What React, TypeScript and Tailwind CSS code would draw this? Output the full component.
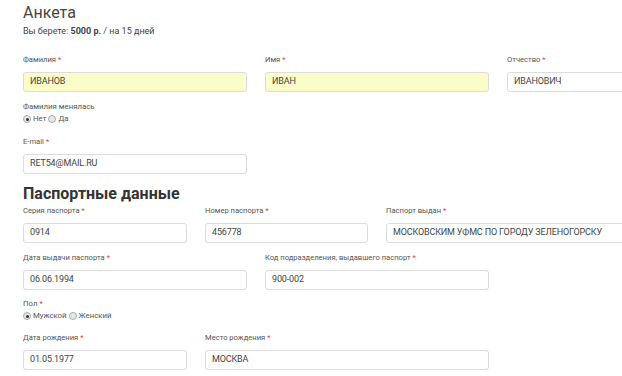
import React from "react";

const Label = ({ text }: { text: string }) => (
  <div className="text-[7.6px] leading-[12px] text-[#555] h-[12px] whitespace-nowrap">
    {text}
    <span className="text-[#e53935] ml-[2px]">*</span>
  </div>
);

const Input = ({ value, w, yellow }: { value: string; w: string; yellow?: boolean }) => (
  <div
    className={`${w} h-[20px] mt-[6px] border border-[#dcdcdc] rounded-[3px] flex items-center px-[6px] text-[9px] tracking-[-0.15px] text-[#444] whitespace-nowrap overflow-hidden ${
      yellow ? "bg-[#fafdc8]" : "bg-white"
    }`}
  >
    {value}
  </div>
);

const Field = ({ label, value, w, yellow }: { label: string; value: string; w: string; yellow?: boolean }) => (
  <div className="flex flex-col shrink-0">
    <Label text={label} />
    <Input value={value} w={w} yellow={yellow} />
  </div>
);

const Radio = ({ checked, label }: { checked?: boolean; label: string }) => (
  <span className="inline-flex items-center gap-[2px] mr-[2px]">
    <span className="w-[8px] h-[8px] rounded-full border border-[#aaa] bg-[#e8e8e8] flex items-center justify-center">
      {checked && <span className="w-[3px] h-[3px] rounded-full bg-[#333]" />}
    </span>
    <span>{label}</span>
  </span>
);

export default function App() {
  return (
    <div
      className="w-[622px] h-[376px] overflow-hidden bg-white pl-[23px] text-[#444]"
      style={{ fontFamily: 'Roboto, "Open Sans", sans-serif' }}
    >
      <div className="w-[760px]">
        <div className="pt-[1px] text-[16px] leading-[24px] text-[#444]">Анкета</div>
        <div className="text-[9px] leading-[12px] text-[#444]">
          Вы берете: <b>5000 р.</b> / на 15 дней
        </div>

        <div className="flex gap-[18px] mt-[17px]">
          <Field label="Фамилия" value="ИВАНОВ" w="w-[224px]" yellow />
          <Field label="Имя" value="ИВАН" w="w-[224px]" yellow />
          <Field label="Отчество" value="ИВАНОВИЧ" w="w-[224px]" />
        </div>

        <div className="mt-[9px] text-[7.8px] leading-[12px] text-[#555]">Фамилия менялась</div>
        <div className="text-[7.8px] leading-[12px] text-[#555] flex items-center">
          <Radio checked label="Нет" />
          <Radio label="Да" />
        </div>

        <div className="flex mt-[11px]">
          <Field label="E-mail" value="RET54@MAIL.RU" w="w-[224px]" />
        </div>

        <div className="text-[16px] leading-[22px] font-bold text-[#333] mt-[9px]">Паспортные данные</div>

        <div className="flex gap-[18px]">
          <Field label="Серия паспорта" value="0914" w="w-[164px]" />
          <Field label="Номер паспорта" value="456778" w="w-[163px]" />
          <Field label="Паспорт выдан" value="МОСКОВСКИМ УФМС ПО ГОРОДУ ЗЕЛЕНОГОРСКУ" w="w-[260px]" />
        </div>

        <div className="flex gap-[18px] mt-[9px]">
          <Field label="Дата выдачи паспорта" value="06.06.1994" w="w-[224px]" />
          <Field label="Код подразделения, выдавшего паспорт" value="900-002" w="w-[224px]" />
        </div>

        <div className="mt-[8px] text-[7.8px] leading-[12px] text-[#555]">
          Пол<span className="text-[#e53935] ml-[2px]">*</span>
        </div>
        <div className="text-[7.8px] leading-[12px] text-[#555] flex items-center">
          <Radio checked label="Мужской" />
          <Radio label="Женский" />
        </div>

        <div className="flex gap-[18px] mt-[10px]">
          <Field label="Дата рождения" value="01.05.1977" w="w-[164px]" />
          <Field label="Место рождения" value="МОСКВА" w="w-[284px]" />
        </div>
      </div>
    </div>
  );
}
